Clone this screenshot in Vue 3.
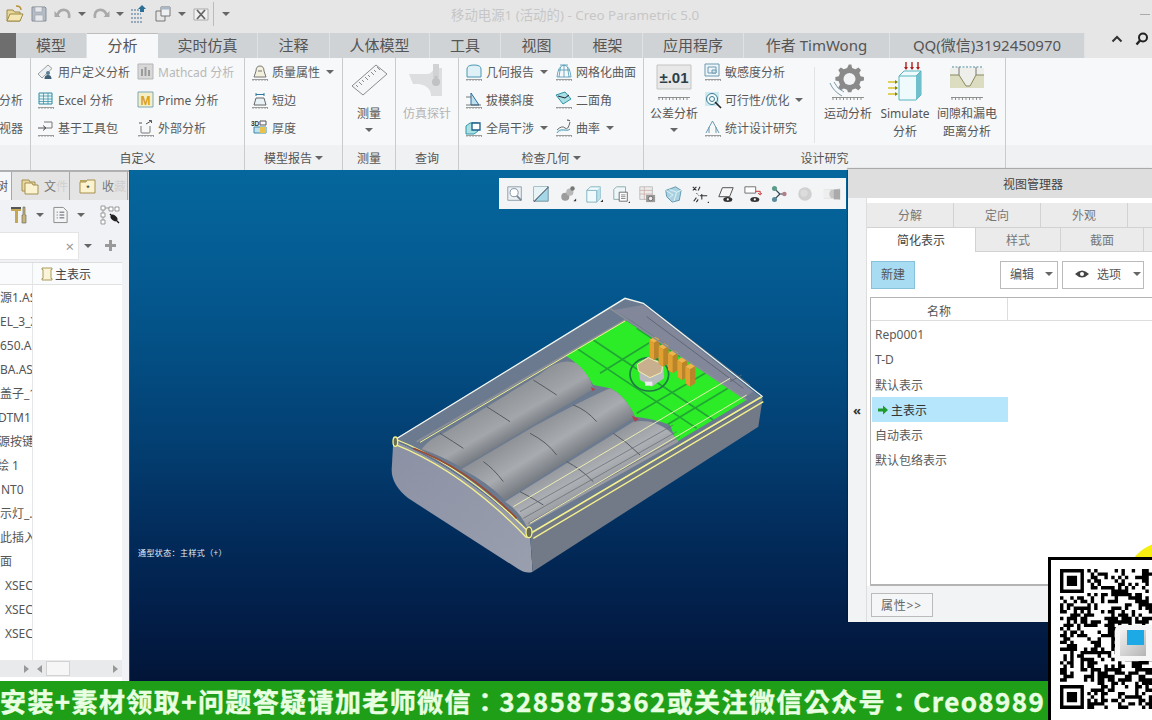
<template>
  <div class="app">
    <!-- title bar -->
    <div class="titlebar">
      <template v-for="(q, i) in quickBar" :key="i">
        <i v-if="q === 'caret'" class="qb-caret"><b class="caret"></b></i>
        <i v-else-if="q === 'sep'" class="qb-sep"></i>
        <svg v-else class="qb" viewBox="0 0 20 20" v-html="icons[q]"></svg>
      </template>
      <span class="app-title">移动电源1 (活动的) - Creo Parametric 5.0</span>
      <span class="win-min"></span>
    </div>

    <!-- ribbon tabs -->
    <div class="tabs">
      <div class="file-tab"></div>
      <div
        v-for="t in tabs"
        :key="t.label"
        class="tab"
        :class="{ active: t.active }"
        :style="{ width: t.w + 'px' }"
      >{{ t.label }}</div>
      <div class="tabs-end">
        <svg class="chev" viewBox="0 0 12 8"><path d="M1.500 6.500 6 2l4.500 4.500" fill="none" stroke="#333" stroke-width="2" /></svg>
        <svg class="find" viewBox="0 0 14 14"><circle cx="8" cy="5.500" r="4" fill="none" stroke="#222" stroke-width="2" /><path d="M5 8.500 1.500 12.500" stroke="#222" stroke-width="2.400" /></svg>
      </div>
    </div>

    <!-- ribbon -->
    <div class="ribbon">
      <div v-for="g in groups" :key="g.label" class="group" :style="{ width: g.w + 'px' }">
        <div class="group-body" :class="g.cls">
          <template v-for="(c, ci) in g.cols" :key="ci">
            <div v-if="c.large" class="large" :class="{ off: c.off }" :style="{ width: c.w + 'px' }">
              <svg class="large-ic" viewBox="0 0 40 40" v-html="icons[c.icon]"></svg>
              <span class="large-label">{{ c.label }}</span>
              <b v-if="c.caret" class="caret"></b>
            </div>
            <i v-else-if="c.sep" class="inner-sep"></i>
            <div v-else class="col" :style="{ width: c.w + 'px' }">
              <div v-for="r in c.rows" :key="r.label" class="row" :class="{ off: r.off }">
                <svg v-if="r.icon" class="row-ic" viewBox="0 0 18 18" v-html="icons[r.icon]"></svg>
                <span>{{ r.label }}</span>
                <b v-if="r.caret" class="caret"></b>
              </div>
            </div>
          </template>
        </div>
        <div class="group-label">{{ g.label }}<b v-if="g.caret" class="caret"></b></div>
      </div>
      <div class="group-rest"><div class="group-rest-body"></div><div class="group-label"></div></div>
    </div>

    <div class="work">
      <!-- model tree -->
      <aside class="side">
        <div class="side-tabs">
          <div class="stab first"><span>树</span></div>
          <div class="stab">
            <svg viewBox="0 0 18 18" v-html="icons.folders"></svg><span>文<em>件</em></span>
          </div>
          <div class="stab">
            <svg viewBox="0 0 18 18" v-html="icons.star"></svg><span>收<em>藏</em></span>
          </div>
        </div>
        <div class="side-tools">
          <svg class="st hammer" viewBox="0 0 18 18" v-html="icons.hammer"></svg>
          <b class="caret"></b>
          <svg class="st doc" viewBox="0 0 18 18" v-html="icons.doc"></svg>
          <b class="caret"></b>
          <svg class="st tree-eye" viewBox="0 0 20 20" v-html="icons.treeEye"></svg>
        </div>
        <div class="side-search">
          <div class="search-box"><span>×</span></div>
          <b class="caret"></b>
          <span class="plus"></span>
        </div>
        <div class="tree">
          <div class="tree-head">
            <div class="tree-left"></div>
            <div class="tree-right">
              <svg viewBox="0 0 14 14"><path d="M2 1h10v1.500H11v9h1V13H2v-1.500h1v-9H2z" fill="#fbf4d8" stroke="#a89a5a" /></svg>
              主表示
            </div>
          </div>
          <div class="tree-cols">
            <div class="tree-left">
              <div v-for="(r, i) in treeRows" :key="i" class="tree-row">
                <span :style="{ marginLeft: r.x + 'px' }">{{ r.t }}</span>
              </div>
            </div>
            <div class="tree-right"></div>
          </div>
          <div class="tree-foot">
            <div class="sb sb-l"><b class="arr r"></b></div>
            <div class="sb sb-r"><b class="arr l"></b><i class="thumb"></i><b class="arr r"></b></div>
          </div>
        </div>
      </aside>

      <!-- graphics area -->
      <main class="view">
        <div class="view-tools">
          <svg v-for="n in viewTools" :key="n" viewBox="0 0 20 20" v-html="icons[n]"></svg>
        </div>
        <svg class="model" viewBox="0 0 1200 900">
          <defs>
            <linearGradient id="c1" gradientUnits="userSpaceOnUse" x1="358" y1="334" x2="422" y2="446">
              <stop offset="0" stop-color="#8f9398" /><stop offset=".6" stop-color="#a3a6aa" /><stop offset="1" stop-color="#777c83" />
            </linearGradient>
            <linearGradient id="c2" gradientUnits="userSpaceOnUse" x1="478" y1="414" x2="550" y2="530">
              <stop offset="0" stop-color="#8f9398" /><stop offset=".55" stop-color="#a8abaf" /><stop offset="1" stop-color="#797e85" />
            </linearGradient>
            <linearGradient id="c3" gradientUnits="userSpaceOnUse" x1="600" y1="505" x2="665" y2="620">
              <stop offset="0" stop-color="#94989d" /><stop offset=".5" stop-color="#adb0b4" /><stop offset="1" stop-color="#90949a" />
            </linearGradient>
            <linearGradient id="fr" x1="0" y1="0" x2="1" y2="1">
              <stop offset="0" stop-color="#8b91a4" /><stop offset="1" stop-color="#9a9fae" />
            </linearGradient>
            <clipPath id="board">
              <path d="M555 210 735 105 1100 345 890 470 870 420Q820 400 765 395 735 330 690 310L640 300Q610 245 555 210Z" />
            </clipPath>
          </defs>
          <!-- shell -->
          <path d="M40 465Q255 555 450 745L458 860Q440 868 415 852L85 640Q35 600 35 555Z" fill="url(#fr)" />
          <path d="M450 745 1148 340 1135 425 458 860Z" fill="#737a87" />
          <path d="M40 465 735 40 790 55 1148 340 450 745Q255 555 40 465Z" fill="#6c7a90" />
          <path d="M700 75 790 60 1120 320 1090 340 760 110Z" fill="#82889a" />
          <path d="M800 95 1090 310M830 85 1110 300M1050 290 1085 270" stroke="#5f6775" stroke-width="3" fill="none" />
          <!-- board -->
          <path d="M555 210 735 105 1100 345 890 470 870 420Q820 400 765 395 735 330 690 310L640 300Q610 245 555 210Z" fill="#2bec27" />
          <g clip-path="url(#board)">
            <path d="M590 190 950 430M640 165 1000 405M660 265 830 160M770 385 1060 215M860 420 1085 285M770 130 900 215" stroke="#1f8f3a" stroke-width="5" fill="none" opacity=".75" />
          </g>
          <!-- batteries -->
          <path d="M125 492Q150 460 190 445L480 268Q540 215 590 235 630 270 640 312L245 548Q190 515 125 492Z" fill="url(#c1)" />
          <path d="M245 552 460 425Q620 340 690 310 735 330 765 395L375 645Q320 590 245 552Z" fill="url(#c2)" />
          <path d="M375 650 760 410Q830 400 880 450L895 470 440 725Q420 680 375 650Z" fill="url(#c3)" />
          <path d="M180 445Q220 470 250 490M320 365Q360 390 390 410M460 285Q500 310 530 330M310 530Q340 550 370 590M450 445Q500 470 530 510M580 360Q620 375 650 410M420 620Q460 640 490 660M560 530Q600 550 640 590M700 445Q740 470 780 510" fill="none" stroke="#565b62" stroke-width="3" />
          <path d="M420 680 880 420M430 700 890 440M445 715 900 455" stroke="#62676d" stroke-width="2" fill="none" />
          <path d="M632 305l14 8-8 6zM755 392l22 10-12 8z" fill="#b0404a" />
          <!-- switch -->
          <ellipse cx="808" cy="268" rx="58" ry="50" fill="none" stroke="#1f7a44" stroke-width="5" />
          <path d="M775 235 805 215 850 235 852 280 815 305 780 285Z" fill="#b9bcbf" />
          <path d="M795 290h22v12h-22z" fill="#eee" />
          <path d="M772 238 805 218 848 238 845 262 810 278 775 258Z" fill="#c8b08e" stroke="#f2eeb0" stroke-width="3" />
          <!-- pins -->
          <g v-for="(p, i) in pins" :key="i" :transform="`translate(${p[0]} ${p[1]})`">
            <path d="M0 0 16-10 30-2 30 50 14 60 0 50Z" fill="#b9842a" />
            <path d="M0 0 16-10 30-2 14 8Z" fill="#eeb54a" />
            <path d="M0 0 14 8 14 60 0 50Z" fill="#e0a032" />
          </g>
          <!-- edges -->
          <path d="M48 462 735 40 790 55 1148 335" fill="none" stroke="#f2f6ee" stroke-width="4" />
          <path d="M110 470 735 105M690 70 1100 345" fill="none" stroke="#8a8f98" stroke-width="5" />
          <path d="M120 472 735 108" fill="none" stroke="#f3f38f" stroke-width="3" />
          <path d="M45 462Q255 545 450 745" fill="none" stroke="#f5f28e" stroke-width="4" />
          <path d="M45 478Q250 560 440 758" fill="none" stroke="#f5f28e" stroke-width="4" />
          <path d="M100 490Q270 555 410 700" fill="none" stroke="#9a4a30" stroke-width="5" />
          <path d="M452 745 1145 335" fill="none" stroke="#f5f28e" stroke-width="5" />
          <path d="M460 760 1150 350" fill="none" stroke="#f5f28e" stroke-width="4" />
          <path d="M450 715 1100 330M400 665 1050 280" fill="none" stroke="#ecedb0" stroke-width="3" />
          <ellipse cx="46" cy="470" rx="7" ry="14" fill="#6a6c50" stroke="#f5f28e" stroke-width="4" />
          <ellipse cx="447" cy="742" rx="9" ry="16" fill="#6a6c50" stroke="#f5f28e" stroke-width="4" />
        </svg>
        <div class="view-note">通型状态：主样式（+）</div>
      </main>
    </div>

    <!-- promo strip -->
    <div class="promo">安装+素材领取+问题答疑请加老师微信：3285875362或关注微信公众号：Creo8989</div>

    <!-- view manager window -->
    <div class="dlg">
      <div class="dlg-title">视图管理器</div>
      <div class="dlg-body">
        <div class="dlg-rail">«</div>
        <div class="dlg-main">
          <div class="dtabs top">
            <div v-for="t in dlgTabsTop" :key="t" class="dtab w87">{{ t }}</div>
            <div class="dtab fill"></div>
          </div>
          <div class="dtabs">
            <div class="dtab w109 on">简化表示</div>
            <div class="dtab w85">样式</div>
            <div class="dtab w83">截面</div>
            <div class="dtab fill"></div>
          </div>
          <div class="dlg-tools">
            <div class="btn new">新建</div>
            <div class="btn edit">编辑<b class="caret"></b></div>
            <div class="btn opts">
              <svg viewBox="0 0 14 10"><path d="M0 5Q7-2 14 5 7 12 0 5Z" fill="#444" /><circle cx="7" cy="5" r="2" fill="#fff" /></svg>
              选项<b class="caret"></b>
            </div>
          </div>
          <div class="list">
            <div class="list-head"><span>名称</span></div>
            <div
              v-for="r in reps"
              :key="r"
              class="list-row"
              :class="{ sel: r === '主表示' }"
            >
              <svg v-if="r === '主表示'" viewBox="0 0 10 10"><path d="M0 3.500h5V.5L10 5 5 9.500v-3H0z" fill="#1f9a2c" /></svg>
              {{ r }}
            </div>
            <i class="spot"></i>
          </div>
          <div class="dlg-foot"><div class="btn props">属性&gt;&gt;</div></div>
        </div>
      </div>
    </div>

    <!-- QR overlay -->
    <div class="qr">
      <svg viewBox="0 0 41 41"><path :d="qrPath" fill="#000" /></svg>
      <div class="qr-logo"><i></i></div>
    </div>
  </div>
</template>

<script setup>
import { computed } from 'vue'

const ruler = '<path d="M1 16.500h16M2 16.500V18M5 16.500V18M8 16.500V18M11 16.500V18M14 16.500V18M16.500 16.500V18" stroke="#8a8a8a" stroke-width=".8" fill="none"/>'
const bigRuler = '<path d="M4 35.500h32M5 35.500V38M8.500 35.500V38M12 35.500V38M15.500 35.500V38M19 35.500V38M22.500 35.500V38M26 35.500V38M29.500 35.500V38M33 35.500V38" stroke="#777" stroke-width=".8" fill="none"/>'

const icons = {
  // quick access
  open: '<path d="M2 6h6l1.500 2H15v9H2z" fill="#e9d79a" stroke="#9d8a45"/><path d="M2 17l3-7h13l-3 7z" fill="#f5e7b3" stroke="#9d8a45"/><path d="M11 2q5 0 5 4" stroke="#b8923a" stroke-width="1.500" fill="none"/>',
  save: '<path d="M3 3h13l1 1v13H3z" fill="#b4bcc6" stroke="#8a8f97"/><path d="M6 3h7v5H6zM6 11h8v6H6z" fill="#e6e8eb" stroke="#9a9ea5" stroke-width=".6"/>',
  undo: '<path d="M4 12Q6 5 12 6 17 7 16 14" fill="none" stroke="#a9a9a9" stroke-width="2.600"/><path d="M1.500 7l6 6H1.500z" fill="#a9a9a9"/>',
  redo: '<path d="M16 12Q14 5 8 6 3 7 4 14" fill="none" stroke="#a9a9a9" stroke-width="2.600"/><path d="M18.500 7l-6 6h6z" fill="#a9a9a9"/>',
  regen: '<path d="M2 6h8M2 10h10M2 14h12M2 18h12" stroke="#7d97ad" stroke-width="1.300" stroke-dasharray="2 1"/><path d="M9 5l4-4 4 4-2 0v3h-4V5z" fill="#2b6f96"/>',
  windows: '<path d="M3 7h9v10H3z" fill="none" stroke="#777"/><path d="M8 3h9v9H8z" fill="#eef0f2" stroke="#777"/><path d="M8 3h9v2.500H8z" fill="#a8b8c8"/>',
  closeWin: '<path d="M3 5h14v11H3z" fill="#f1f1f1" stroke="#aaa"/><path d="M6 6l8 9M14 6l-8 9" stroke="#666" stroke-width="1.800"/>',
  // ribbon small
  user: '<path d="M1 11 11 2l4 3.500L5 15z" fill="#eef1f3" stroke="#888" stroke-width=".8"/><circle cx="11" cy="10" r="2" fill="#5b7f95"/><path d="M7.500 16q0-4 3.500-4t3.500 4z" fill="#3f6076"/>',
  mathcad: '<path d="M1 1h15v15H1z" fill="#d8d8d8" stroke="#b5b5b5"/><path d="M4 13V6h2v7zM7.500 13V4h2v9zM11 13V7h2v6z" fill="#9b9b9b"/>',
  excel: '<path d="M2 2h13v11H2z" fill="#eaf6f8" stroke="#2f8aa0"/><path d="M2 5h13M2 8h13M2 10.500h13M6.500 2v11M11 2v11" stroke="#2f8aa0" stroke-width=".7"/>' + ruler,
  prime: '<path d="M1 1h15v15H1z" fill="#f6efc6" stroke="#7aa8b8"/><text x="8.500" y="13.500" font-size="12" font-weight="700" text-anchor="middle" fill="#d9a020" font-family="Liberation Sans">M</text>',
  toolkit: '<path d="M7 3h8v6H7" fill="none" stroke="#777"/><path d="M1 9h8M6 6.500 9 9l-3 2.500" fill="none" stroke="#555"/>' + ruler,
  external: '<path d="M4 7v6q0 1 1 1h7q1 0 1-1V7" fill="none" stroke="#777"/><path d="M2 4h3M9 5l5-3M12 1.500h2.500V4" stroke="#555" fill="none"/>' + ruler,
  mass: '<path d="M5 8q0-5 4-5t4 5l2 6H3z" fill="#f3f0dc" stroke="#777"/><path d="M7 8h4" stroke="#777"/>' + ruler,
  short: '<path d="M5 2v3M13 2v3M5 3.500h8" stroke="#2f7a9c" fill="none"/><path d="M5 7h8l2 7H3z" fill="#e9f3f7" stroke="#666"/>' + ruler,
  thick: '<text x="0" y="7" font-size="6.500" font-weight="700" fill="#333" font-family="Liberation Sans">3D</text><path d="M9 2h6v4H9z" fill="none" stroke="#555"/><path d="M3 8h12v6H3z" fill="#bfe0ee" stroke="#3a8aac"/><path d="M9 8h6v6H9z" fill="#e8c24c"/>',
  geom: '<path d="M2 14V6q0-4 7-4t7 4v8z" fill="#dff1f6" stroke="#4b98b5"/>' + ruler,
  draft: '<path d="M6 14V2l8 12z" fill="#bfe0ee" stroke="#2a6f9c"/><path d="M1 6h5M1 14h15" stroke="#555" stroke-width=".8"/>' + ruler,
  inter: '<path d="M1 7l4-3h8v8l-4 3H1z" fill="#a9e0e4" stroke="#2f94a8"/><path d="M7 4h8v7H7z" fill="#fff" stroke="#1c5f8a" stroke-width="1.300"/>' + ruler,
  mesh: '<path d="M2 14q1-11 7-12 6 1 7 12M9 2v12M5 2h8M3 7h12M2 14h14M5.500 4 4 14M12.500 4l1.500 10" fill="none" stroke="#4b98b5" stroke-width=".8"/>' + ruler,
  dihedral: '<path d="M1 4l9-3 6 7-8 5z" fill="#a9e0e4" stroke="#2f94a8"/><path d="M3 5l7 2 4-3" fill="none" stroke="#223" />' + ruler,
  curv: '<path d="M2 11q5-5 8-2t5-6" fill="none" stroke="#666" stroke-width="1"/><path d="M2 14q2-4 7-3t6-1" fill="#d8eef3" stroke="#4b98b5"/><path d="M12 1q2 0 3 1" stroke="#555"/>' + ruler,
  sens: '<path d="M1 1h14v12H1z" fill="#eef5f8" stroke="#6c9ab0"/><path d="M4 4h8v6H4z" fill="none" stroke="#6c9ab0"/><path d="M8 7h4v3H8z" fill="#cfe6ef" stroke="#6c9ab0"/>' + ruler,
  feas: '<path d="M1 1h14v14H1z" fill="#cdeaf0"/><circle cx="8" cy="8" r="5.500" fill="#f3fafb" stroke="#3a7a90"/><circle cx="8" cy="8" r="2.500" fill="none" stroke="#3a7a90"/><path d="M11 11l6 6" stroke="#222" stroke-width="1.600"/>',
  stat: '<path d="M2 14 8.500 2 15 14M5 14V8M12 14V8" fill="none" stroke="#6c9ab0"/>' + ruler,
  // ribbon large
  ruler: '<path d="M3 24 27 3l11 9-24 21z" fill="#f5f6f7" stroke="#8c8c8c"/><path d="M7 23l2 2M10 20l3 3M13 18l2 2M16 15l3 3M19 13l2 2M22 10l3 3M25 8l2 2M28 5l3 3" stroke="#8c8c8c"/>',
  probe: '<path d="M2 12h18q5 0 7-6h8v28H24q0-10-12-12H6z" fill="#dcdedf"/><path d="M26 2h6v14h-6z" fill="#d0d2d4"/><circle cx="29" cy="20" r="4" fill="#c0c2c4"/><path d="M29 14v4" stroke="#c0c2c4" stroke-width="3"/>',
  tol: '<path d="M3 3h34v24H3z" fill="#e8e8e8" stroke="#c4c4c4"/><text x="20" y="21" font-size="15" font-weight="700" text-anchor="middle" fill="#2c3e4a" font-family="Liberation Sans">±.01</text>' + bigRuler,
  gear: '<path d="M20 3l3 0 1 4 4 1.500 3.500-2 3 3-2 3.500L34 17l4 1v4l-4 1-1.500 4 2 3.500-3 3-3.500-2L24 33l-1 3h-4l-1-3-4-1.500-3.500 2-3-3 2-3.500L8 23l-4-1v-4l4-1 1.500-4-2-3.500 3-3 3.500 2L18 7z" transform="translate(4 0) scale(.84)" fill="#8a8a8a"/><circle cx="21.500" cy="17" r="6" fill="#f3f4f5"/><path d="M2 21q3 8 12 13M6 20q3 7 10 10" fill="none" stroke="#6d8ea0" stroke-width=".9"/>' + bigRuler,
  sim: '<path d="M14 14l5-5h17v24l-5 5H14z" fill="#eefafc" stroke="#59b4c0"/><path d="M31 14l5-5v24l-5 5z" fill="#6fc0cc"/><path d="M14 14h17l5-5" fill="none" stroke="#59b4c0"/><path d="M21 0v7M27 0v7M33 0v7" stroke="#b02020" stroke-width="1.400"/><path d="M19 5l2 3 2-3zM25 5l2 3 2-3zM31 5l2 3 2-3z" fill="#b02020"/><path d="M3 20h9M3 26h9M3 32h9" stroke="#d9c22c" stroke-width="1.400"/><path d="M10 18l3 2-3 2zM10 24l3 2-3 2zM10 30l3 2-3 2z" fill="#7a8a20"/>',
  gap: '<path d="M3 6h34v20H3z" fill="#eeeeea"/><path d="M3 13h9l7 11h4l6-11h8v13H3z" fill="#dbdcc0"/><path d="M5 5h30" stroke="#4b8a9a" stroke-dasharray="2 1.500"/><path d="M3 13h9l7 11h4l6-11h8" fill="none" stroke="#8a8a60"/><path d="M12 5v8M29 5v8" stroke="#777"/>' + bigRuler,
  // side panel
  folders: '<path d="M1 3h7l1 2h5v9H1z" fill="#e8d8a0" stroke="#a58f50"/><path d="M4 6h7l1 2h5v9H4z" fill="#fbf3cf" stroke="#a58f50"/>',
  star: '<path d="M1 5h6l1-2h8v13H1z" fill="#fbf3cf" stroke="#a58f50"/><path d="M1 3h6v2H1z" fill="#b8a55e"/><text x="9" y="14" font-size="9" text-anchor="middle" fill="#333" font-family="Liberation Sans">*</text>',
  hammer: '<path d="M1 1h10v4H8v12H5V5H1z" fill="#c4a852"/><path d="M1 1h10v2H1z" fill="#555"/><path d="M13 1h2v8h1v8h-4V9h1z" fill="#c9b478" stroke="#5c5c5c" stroke-width=".6"/>',
  doc: '<path d="M2 1h10l4 4v12H2z" fill="#f3f4f5" stroke="#888"/><path d="M5 6h1M8 6h5M5 9h1M8 9h5M5 12h1M8 12h5" stroke="#556" />',
  treeEye: '<path d="M1 1h4v4H1zM1 8h4v4H1zM1 15h4v4H1zM9 2h4v4H9zM15 2h4v4h-4z" fill="#fff" stroke="#999"/><path d="M5 3h4M3 5v3M3 12v3" stroke="#999"/><path d="M10 9l9 9" stroke="#111" stroke-width="1.200"/><ellipse cx="14" cy="13" rx="4" ry="2.500" transform="rotate(40 14 13)" fill="#222"/>',
  // graphics toolbar
  vtZoom: '<path d="M2 2h15v15H2z" fill="#eef2f4" stroke="#8a9aa4"/><circle cx="9" cy="8.500" r="4.500" fill="#fff" stroke="#789"/><path d="M12 12l5 5" stroke="#789" stroke-width="2"/>',
  vtFit: '<path d="M2 2h16v16H2z" fill="#a4d8e8" stroke="#6a8a98"/><path d="M2 18 18 2" stroke="#223" stroke-width="1.400"/><path d="M2 2h16L2 18z" fill="#e6f4f8"/>',
  vtBlob: '<circle cx="7" cy="13" r="4.500" fill="#9c9c9c"/><circle cx="12" cy="8" r="4" fill="#b8b8b8"/><circle cx="15" cy="4" r="2.500" fill="#777"/><path d="M16 18h3v-3z" fill="#333"/>',
  vtCube: '<path d="M2 6l4-4h11v13l-4 4H2z" fill="#f0fafc" stroke="#7cb0c0"/><path d="M13 6l4-4v13l-4 4z" fill="#b9e0e8"/><path d="M2 6h11v13" fill="none" stroke="#7cb0c0"/><path d="M17 19h3v-3z" fill="#333"/>',
  vtCubeDoc: '<path d="M2 5l3-3h10v14H2z" fill="#eef6f8" stroke="#8aa"/><path d="M8 8h9v10H8z" fill="#fff" stroke="#666"/><path d="M10 11h5M10 13h5M10 15h5" stroke="#666" stroke-width=".8"/><path d="M18 20h2v-2z" fill="#333"/>',
  vtCam: '<path d="M2 2h14v14H2z" fill="#ececec" stroke="#bbb"/><path d="M2 6h14M2 10h14M7 2v14" stroke="#c8a8a0" stroke-width=".8"/><path d="M9 11h10v8H9z" fill="#999"/><circle cx="14" cy="15" r="2.500" fill="#eee" stroke="#666"/>',
  vtWire: '<path d="M2 6l11-4 6 4-2 11-8 2-6-6z" fill="#a8d2e2" stroke="#5c93aa"/><path d="M6 5l8 3 5-2M14 8l-3 10M2 6l8 5-4 3" fill="none" stroke="#eaf6f9" stroke-width=".9"/>',
  vtAxes: '<path d="M2 2l4 4M6 2 2 6M10 2 8 6M12 10v6M10 12h8M8 16l-2 3M3 18l3-4" stroke="#333" stroke-width="1.200" fill="none"/><path d="M6 9l3 3" stroke="#333" stroke-dasharray="1.500 1"/><path d="M18 20h2v-2z" fill="#333"/>',
  vtPlane: '<path d="M6 3h12l-4 10H2z" fill="#f7f7f7" stroke="#444"/><ellipse cx="12" cy="16" rx="5" ry="2.800" fill="#333"/><circle cx="12" cy="16" r="1.200" fill="#fff"/>',
  vtRect: '<path d="M1 2h12v7H1z" fill="#fff" stroke="#666"/><path d="M13 7h5v3M15.500 9l2.500 2 2-2" stroke="#c22" fill="none"/><ellipse cx="12" cy="16" rx="5" ry="2.800" fill="#333"/><circle cx="12" cy="16" r="1.200" fill="#fff"/>',
  vtNode: '<path d="M5 4l6 6-6 6M11 10h6" stroke="#2c3e4a" stroke-width="1.300" fill="none"/><circle cx="5" cy="4" r="2.800" fill="#5b9a88"/><circle cx="5" cy="16" r="2.800" fill="#5b8a9a"/><circle cx="16" cy="10" r="2.500" fill="#b0808a"/>',
  vtBall: '<circle cx="10" cy="10" r="7.500" fill="#d0d0d0"/><circle cx="9" cy="9" r="4" fill="#dcdcdc"/>',
  vtShade: '<path d="M1 5h11l7-1v12l-7-1H1z" fill="#c8c8c8"/><path d="M1 5h8q-4 5 0 10H1z" fill="#eeeeee"/><path d="M12 5h7v11h-7z" fill="#aaa"/>'
}

const quickBar = ['open', 'save', 'undo', 'caret', 'redo', 'caret', 'regen', 'windows', 'caret', 'closeWin', 'sep', 'caret']

const tabs = [
  { label: '模型', w: 71 },
  { label: '分析', w: 71, active: true },
  { label: '实时仿真', w: 100 },
  { label: '注释', w: 72 },
  { label: '人体模型', w: 100 },
  { label: '工具', w: 71 },
  { label: '视图', w: 72 },
  { label: '框架', w: 70 },
  { label: '应用程序', w: 101 },
  { label: '作者 TimWong', w: 146 },
  { label: 'QQ(微信)3192450970', w: 195 }
]

const groups = [
  {
    label: '', w: 31, cls: 'clip',
    cols: [{ w: 30, rows: [{ label: '' }, { label: '分析' }, { label: '视器' }] }]
  },
  {
    label: '自定义', w: 214,
    cols: [
      { w: 100, rows: [
        { icon: 'user', label: '用户定义分析' },
        { icon: 'excel', label: 'Excel 分析' },
        { icon: 'toolkit', label: '基于工具包' }
      ] },
      { w: 106, rows: [
        { icon: 'mathcad', label: 'Mathcad 分析', off: true },
        { icon: 'prime', label: 'Prime 分析' },
        { icon: 'external', label: '外部分析' }
      ] }
    ]
  },
  {
    label: '模型报告', w: 98, caret: true,
    cols: [{ w: 90, rows: [
      { icon: 'mass', label: '质量属性', caret: true },
      { icon: 'short', label: '短边' },
      { icon: 'thick', label: '厚度' }
    ] }]
  },
  {
    label: '测量', w: 53, cls: 'flush',
    cols: [{ large: true, w: 52, icon: 'ruler', label: '测量', caret: true }]
  },
  {
    label: '查询', w: 63, cls: 'flush',
    cols: [{ large: true, w: 62, icon: 'probe', label: '仿真探针', off: true }]
  },
  {
    label: '检查几何', w: 185, caret: true,
    cols: [
      { w: 90, rows: [
        { icon: 'geom', label: '几何报告', caret: true },
        { icon: 'draft', label: '拔模斜度' },
        { icon: 'inter', label: '全局干涉', caret: true }
      ] },
      { w: 88, rows: [
        { icon: 'mesh', label: '网格化曲面' },
        { icon: 'dihedral', label: '二面角' },
        { icon: 'curv', label: '曲率', caret: true }
      ] }
    ]
  },
  {
    label: '设计研究', w: 362, cls: 'flush',
    cols: [
      { large: true, w: 60, icon: 'tol', label: '公差分析', caret: true },
      { w: 110, rows: [
        { icon: 'sens', label: '敏感度分析' },
        { icon: 'feas', label: '可行性/优化', caret: true },
        { icon: 'stat', label: '统计设计研究' }
      ] },
      { sep: true },
      { large: true, w: 56, icon: 'gear', label: '运动分析' },
      { large: true, w: 58, icon: 'sim', label: 'Simulate 分析' },
      { large: true, w: 66, icon: 'gap', label: '间隙和漏电距离分析' }
    ]
  }
]

const treeRows = [
  { t: '电源1.ASM', x: -12 },
  { t: 'EL_3_X', x: 0 },
  { t: '650.ASM', x: 0 },
  { t: 'BA.ASM', x: 0 },
  { t: '盖子_1', x: 0 },
  { t: 'DTM1', x: -2 },
  { t: '源按键', x: -2 },
  { t: '绘 1', x: -3 },
  { t: 'NT0', x: 1 },
  { t: '示灯_.PRT', x: 0 },
  { t: '此插入', x: 0 },
  { t: '面', x: 0 },
  { t: 'XSEC', x: 5 },
  { t: 'XSEC', x: 5 },
  { t: 'XSEC', x: 5 }
]

const viewTools = ['vtZoom', 'vtFit', 'vtBlob', 'vtCube', 'vtCubeDoc', 'vtCam', 'vtWire', 'vtAxes', 'vtPlane', 'vtRect', 'vtNode', 'vtBall', 'vtShade']

const pins = [[808, 165], [836, 185], [864, 205], [892, 226], [916, 245]]

const dlgTabsTop = ['分解', '定向', '外观']
const reps = ['Rep0001', 'T-D', '默认表示', '主表示', '自动表示', '默认包络表示']

// QR-like module pattern, fixed seed so each render is the same
const qrPath = computed(() => {
  const n = 41
  const cells = []
  let seed = 20231
  const next = () => {
    seed = (seed * 1103515245 + 12345) & 0x7fffffff
    return (seed >> 16) & 1
  }
  for (let y = 0; y < n; y++) {
    cells.push([])
    for (let x = 0; x < n; x++) cells[y].push(next())
  }
  const finder = (ox, oy) => {
    for (let y = -1; y < 8; y++) {
      for (let x = -1; x < 8; x++) {
        const cx = ox + x
        const cy = oy + y
        if (cx < 0 || cy < 0 || cx >= n || cy >= n) continue
        const ring = x === 0 || x === 6 || y === 0 || y === 6
        const core = x >= 2 && x <= 4 && y >= 2 && y <= 4
        const inside = x >= 0 && x <= 6 && y >= 0 && y <= 6
        cells[cy][cx] = inside && (ring || core) ? 1 : 0
      }
    }
  }
  finder(0, 0)
  finder(34, 0)
  finder(0, 34)
  let d = ''
  cells.forEach((row, y) => row.forEach((v, x) => {
    if (v) d += `M${x} ${y}h1v1h-1z`
  }))
  return d
})
</script>

<style scoped>
.app {
  position: relative;
  width: 1152px;
  height: 720px;
  overflow: hidden;
  display: flex;
  flex-direction: column;
  background: #e6e6e6;
  color: #555;
  font-family: "Noto Sans", "Noto Sans CJK SC", sans-serif;
  font-size: 12px;
}

.caret {
  display: inline-block;
  width: 0;
  height: 0;
  border-left: 4px solid transparent;
  border-right: 4px solid transparent;
  border-top: 4px solid #666;
}

/* title bar */
.titlebar {
  height: 33px;
  flex: none;
  display: flex;
  align-items: center;
  padding: 0 0 5px 3px;
  box-sizing: border-box;
  background: #e6e6e6;
}
.qb { width: 20px; height: 20px; padding: 0 2px; flex: none; box-sizing: content-box; }
.qb-caret { width: 14px; display: flex; justify-content: center; flex: none; }
.qb-sep { width: 1px; height: 24px; background: #bbb; margin-right: 5px; flex: none; }
.app-title { margin-left: 218px; font-size: 13.4px; color: #c6c6c6; white-space: nowrap; }
.win-min { margin-left: auto; margin-right: 2px; width: 10px; height: 1px; background: #aaa; }

/* tabs */
.tabs { height: 25px; flex: none; display: flex; background: #e6e6e6; }
.file-tab { width: 16px; background: #6e6e6e; }
.tab {
  box-sizing: border-box;
  display: flex;
  align-items: center;
  justify-content: center;
  padding-bottom: 3px;
  font-size: 15px;
  color: #555;
  background: #d0d3d6;
  border-right: 1px solid #dfe1e3;
  white-space: nowrap;
}
.tab.active { background: #f7f8f9; border-top: 1px solid #bdbdbd; border-right: 0; }
.tabs-end { flex: 1; display: flex; align-items: center; justify-content: flex-end; gap: 12px; padding: 0 3px 13px 0; box-sizing: border-box; }
.chev { width: 12px; height: 8px; }
.find { width: 14px; height: 14px; }

/* ribbon */
.ribbon { height: 112px; flex: none; display: flex; background: #f7f8f9; }
.group { flex: none; display: flex; flex-direction: column; box-sizing: border-box; border-right: 1px solid #c9cbcd; }
.group-body { flex: 1; display: flex; padding-left: 6px; min-height: 0; overflow: hidden; }
.group-body.flush { padding-left: 0; }
.group-body.clip { padding-left: 0; }
.group-body.clip .col { align-items: flex-end; padding-right: 7px; box-sizing: border-box; }
.group-label {
  height: 25px;
  flex: none;
  display: flex;
  align-items: center;
  justify-content: center;
  gap: 3px;
  background: #f0f1f2;
  color: #555;
}
.group-rest { flex: 1; display: flex; flex-direction: column; }
.group-rest-body { flex: 1; }
.col { flex: none; display: flex; flex-direction: column; }
.row { height: 28px; display: flex; align-items: center; white-space: nowrap; color: #5a5a5a; }
.row .caret { margin-left: 6px; }
.row.off { color: #b8b8b8; }
.row-ic { width: 18px; height: 18px; margin-right: 3px; flex: none; }

.large { flex: none; display: flex; flex-direction: column; align-items: center; padding-top: 4px; box-sizing: border-box; text-align: center; }
.large-ic { width: 40px; height: 40px; flex: none; }
.large-label { line-height: 17.500px; margin-top: 3px; }
.large .caret { margin-top: 5px; }
.large.off { color: #b4b4b4; }
.inner-sep { width: 1px; height: 76px; margin: 9px 5px 0 0; background: #e2e3e4; flex: none; }

/* side panel */
.work { flex: 1; display: flex; min-height: 0; }
.side { width: 130px; flex: none; display: flex; flex-direction: column; background: #f0f2f5; border-right: 1px solid #2c4c68; box-sizing: border-box; }
.side-tabs { height: 30px; flex: none; display: flex; background: #e4e4e4; border-top: 2px solid #b0b0b0; box-sizing: border-box; }
.stab { width: 58px; display: flex; align-items: center; gap: 5px; padding-left: 9px; box-sizing: border-box; overflow: hidden; border-right: 1px solid #a8a8a8; color: #777; font-size: 12px; white-space: nowrap; }
.stab svg { width: 18px; height: 18px; flex: none; }
.stab em { font-style: normal; color: #d0d0d0; }
.stab.first { width: 12px; padding-left: 0; background: #f6f7f8; color: #555; }
.stab.first span { margin-left: -4px; }
.side-tools { height: 29px; flex: none; display: flex; align-items: center; padding-left: 10px; }
.st { width: 17px; height: 18px; }
.st.hammer { width: 18px; height: 20px; }
.side-tools .caret { margin: 0 8px 0 8px; }
.tree-eye { width: 20px; height: 20px; margin-left: 7px; }
.side-search { height: 33px; flex: none; display: flex; align-items: center; }
.search-box { width: 79px; height: 28px; background: #fff; border: 1px solid #e4e4e4; border-left: 0; box-sizing: border-box; display: flex; align-items: center; justify-content: flex-end; padding-right: 4px; color: #999; font-size: 15px; }
.side-search .caret { margin: 0 0 0 5px; }
.plus {
  width: 11px;
  height: 11px;
  margin-left: 13px;
  background:
    linear-gradient(#999, #999) center / 100% 3px no-repeat,
    linear-gradient(#999, #999) center / 3px 100% no-repeat;
}
.tree { flex: 1; width: 122px; min-height: 0; display: flex; flex-direction: column; background: #fff; border-top: 1px solid #ddd; }
.tree-head { height: 22px; flex: none; display: flex; border-bottom: 1px solid #e2e2e2; background: #fafbfc; box-sizing: border-box; }
.tree-left { width: 33px; flex: none; box-sizing: border-box; border-right: 1px solid #e4e6e8; overflow: hidden; }
.tree-right { flex: 1; display: flex; align-items: center; gap: 1px; padding-left: 7px; color: #444; }
.tree-right svg { width: 14px; height: 14px; }
.tree-cols { flex: 1; display: flex; min-height: 0; }
.tree-row { height: 24px; display: flex; align-items: center; white-space: nowrap; color: #555; overflow: hidden; }
.tree-row span { flex: none; }
.tree-foot { height: 17px; flex: none; display: flex; background: #e9eaeb; margin-bottom: 4px; }
.sb { display: flex; align-items: center; box-sizing: border-box; }
.sb-l { width: 33px; justify-content: flex-end; padding-right: 4px; }
.sb-r { flex: 1; padding: 0 4px 0 4px; gap: 4px; }
.thumb { width: 24px; height: 15px; background: #f6f6f6; border: 1px solid #d2d2d2; box-sizing: border-box; margin-right: auto; }
.arr { width: 0; height: 0; border-top: 4px solid transparent; border-bottom: 4px solid transparent; }
.arr.r { border-left: 5px solid #999; }
.arr.l { border-right: 5px solid #999; }

/* graphics area */
.view {
  flex: 1;
  position: relative;
  overflow: hidden;
  background: linear-gradient(#05679d 0%, #045b92 20%, #034d82 38%, #033d70 55%, #022b5a 72%, #021d47 88%, #021538 100%);
}
.view-tools {
  position: absolute;
  left: 369px;
  top: 8px;
  width: 347px;
  height: 31px;
  box-sizing: border-box;
  display: flex;
  align-items: center;
  justify-content: space-between;
  padding: 0 5px 0 7px;
  background: #f2f4f6;
}
.view-tools svg { width: 18px; height: 18px; flex: none; }
.model { position: absolute; left: 250px; top: 115px; width: 400px; height: 300px; }
.view-note {
  position: absolute;
  left: 8px;
  top: 377px;
  color: #e4eef6;
  font-size: 8px;
  letter-spacing: .4px;
  white-space: nowrap;
}

/* promo */
.promo {
  height: 39px;
  flex: none;
  box-sizing: border-box;
  display: flex;
  align-items: center;
  background: #1f9f17;
  color: #e8ffe2;
  font-family: "Noto Sans CJK TC", "Noto Sans CJK SC", sans-serif;
  font-weight: 700;
  font-size: 26px;
  letter-spacing: 1.400px;
  -webkit-text-stroke: .4px #e8ffe2;
  white-space: nowrap;
  overflow: hidden;
}

/* view manager */
.dlg {
  position: absolute;
  left: 848px;
  top: 168px;
  right: 0;
  height: 454px;
  display: flex;
  flex-direction: column;
  background: #f1f3f5;
  box-shadow: -1px 0 1px rgba(0, 0, 0, .2);
}
.dlg-title { height: 30px; flex: none; display: flex; align-items: center; justify-content: center; padding-left: 66px; background: #dedede; color: #444; border-top: 1px solid #aaa; box-sizing: border-box; }
.dlg-body { flex: 1; display: flex; min-height: 0; }
.dlg-rail { width: 18px; flex: none; display: flex; align-items: center; justify-content: center; color: #333; font-size: 13px; font-weight: 700; }
.dlg-main { flex: 1; display: flex; flex-direction: column; min-width: 0; padding-top: 5px; background: #fff; border-left: 1px solid #ddd; box-sizing: border-box; }
.dtabs { display: flex; height: 24px; flex: none; }
.dtabs.top { height: 25px; }
.dtab { display: flex; align-items: center; justify-content: center; box-sizing: border-box; background: #ebebeb; color: #777; border-right: 1px solid #d2d2d2; border-bottom: 1px solid #d2d2d2; flex: none; }
.dtab.w87 { width: 87px; }
.dtab.w109 { width: 109px; }
.dtab.w85 { width: 85px; }
.dtab.w83 { width: 83px; }
.dtab.fill { flex: 1; border-right: 0; }
.dtab.on { background: #fff; color: #444; border-bottom: 0; }
.dlg-tools { height: 45px; flex: none; display: flex; align-items: flex-start; padding: 9px 0 0 4px; box-sizing: border-box; }
.btn { box-sizing: border-box; display: flex; align-items: center; border: 1px solid #bbb; background: #fff; color: #555; }
.btn.new { width: 44px; height: 28px; justify-content: center; padding-bottom: 2px; background: #a8dcf3; border-color: #86c3da; }
.btn.edit { width: 58px; height: 28px; margin-left: 85px; padding: 0 0 2px 9px; }
.btn.edit .caret { margin-left: 11px; }
.btn.opts { width: 82px; height: 28px; margin-left: 4px; padding: 0 0 2px 12px; }
.btn.opts svg { width: 14px; height: 10px; margin-right: 8px; }
.btn.opts .caret { margin-left: 12px; }
.list {
  position: relative;
  flex: 1;
  min-height: 0;
  margin-left: 3px;
  overflow: hidden;
  border: 1px solid #b4b4b4;
  border-right: 0;
  border-bottom-width: 2px;
  background: #fff;
}
.list-head { height: 23px; width: 137px; display: flex; align-items: center; justify-content: center; padding-top: 3px; border-right: 1px solid #ddd; border-bottom: 1px solid #ddd; box-sizing: border-box; color: #555; }
.list-head::after { content: ""; position: absolute; left: 137px; right: 0; top: 22px; height: 1px; background: #ddd; }
.list-row { height: 25px; width: 136px; margin-left: 1px; box-sizing: border-box; padding-left: 3px; display: flex; align-items: center; color: #5a5a5a; white-space: nowrap; }
.list-head + .list-row { margin-top: 1px; }
.list-row.sel { background: #b5e6fb; color: #333; padding-left: 6px; gap: 3px; }
.list-row svg { width: 10px; height: 10px; }
.spot { position: absolute; left: 253px; top: 243px; width: 90px; height: 90px; border-radius: 50%; background: #f5ee10; }
.dlg-foot { height: 36px; flex: none; padding: 7px 0 0 4px; box-sizing: border-box; background: #f1f3f5; }
.btn.props { width: 62px; height: 24px; padding-left: 9px; background: #f5f6f7; color: #666; letter-spacing: .8px; }

/* QR */
.qr {
  position: absolute;
  left: 1048px;
  top: 557px;
  right: 0;
  bottom: 0;
  background: #fff;
  border: 3px solid #000;
  border-width: 3px 0 0 3px;
  box-sizing: border-box;
  overflow: hidden;
}
.qr svg { position: absolute; left: 9px; top: 9px; width: 140px; height: 140px; }
.qr-logo {
  position: absolute;
  left: 64px;
  top: 65px;
  width: 60px;
  height: 36px;
  box-sizing: border-box;
  padding: 5px 0 0 5px;
  background: #f6f6f6;
  border-radius: 5px;
}
.qr-logo i {
  display: block;
  width: 26px;
  height: 26px;
  background:
    linear-gradient(#1da9e6, #1da9e6) 7px 0 / 17px 15px no-repeat,
    linear-gradient(135deg, #f2f2f2, #b5b5b5);
}
</style>
